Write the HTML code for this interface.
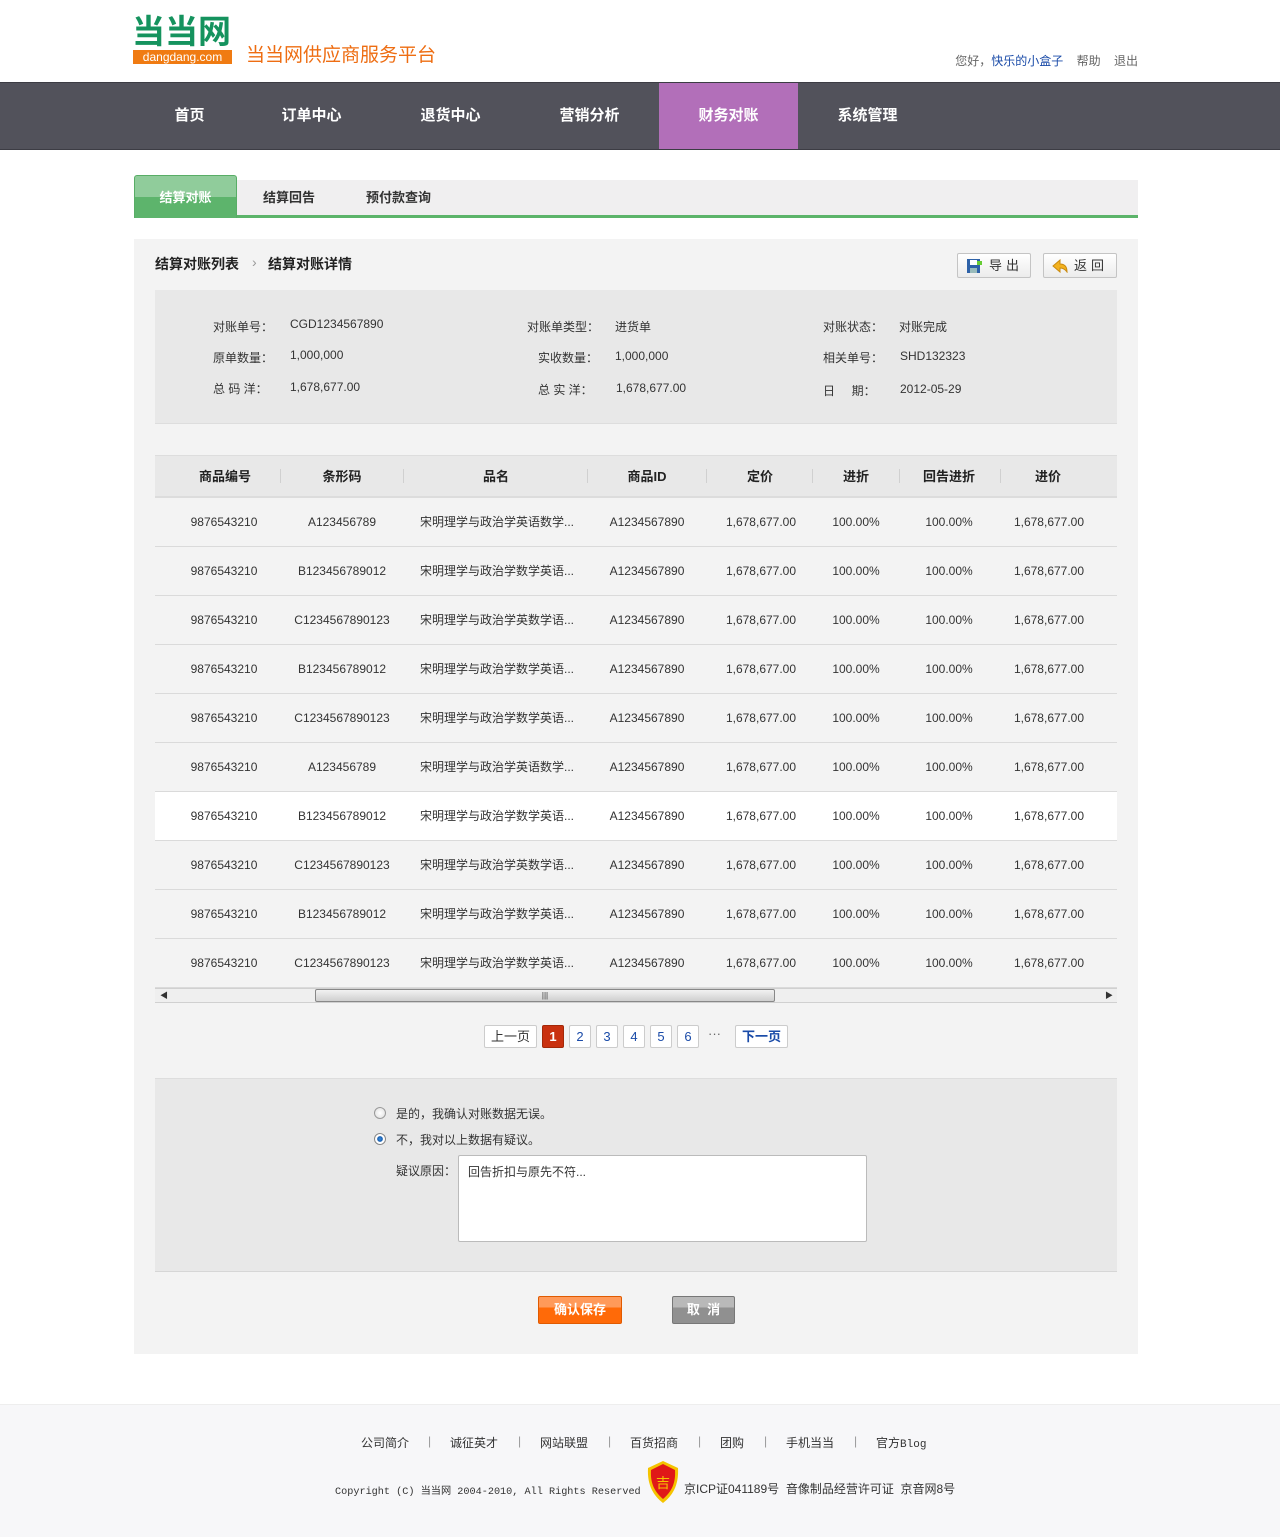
<!DOCTYPE html>
<html><head><meta charset="utf-8">
<style>
*{margin:0;padding:0;box-sizing:border-box}
body{width:1280px;height:1537px;position:relative;background:#fff;font-family:"Liberation Sans","Noto Sans CJK SC",sans-serif;font-size:12px;color:#333;overflow:hidden}
.a{position:absolute;white-space:nowrap}
.nav{position:absolute;left:0;top:82px;width:1280px;height:68px;background:#52525b;border-top:1px solid #3c3c44;border-bottom:1px solid #3c3c44}
.nav span{position:absolute;top:0;height:66px;line-height:66px;color:#fff;font-size:15px;font-weight:bold;text-align:center;width:139px}
.tabs{position:absolute;left:134px;top:180px;width:1004px;height:38px;background:#f0eff0;border-bottom:3px solid #5cb46a}
.tab{position:absolute;top:0;font-size:13px;font-weight:bold;color:#333;line-height:36px}
.panel{position:absolute;left:134px;top:239px;width:1004px;height:1115px;background:#f3f3f3}
.btn{position:absolute;top:253px;height:25px;width:74px;border:1px solid #c4c4c4;border-radius:2px;background:linear-gradient(#fff,#ececec);font-size:13px;line-height:23px;letter-spacing:4px}
.info{position:absolute;left:155px;top:290px;width:962px;height:134px;background:#e8e8e8;border-bottom:1px solid #ddd}
.info .a{font-size:12px;color:#333}
.th{position:absolute;left:155px;top:455px;width:962px;height:43px;background:#e8e8e8;border-top:1px solid #ddd;border-bottom:2px solid #dcdcdc}
.c{position:absolute;text-align:center;width:130px;margin-left:-65px}
.th .c{top:0;line-height:41px;font-weight:bold;font-size:13px;color:#222}
.sep{position:absolute;top:13px;width:1px;height:14px;background:#d0d0d0}
.row{position:absolute;left:155px;width:962px;height:49px;border-bottom:1px solid #dadada}
.row .c{line-height:48px;font-size:12px;color:#333}
.pg{position:absolute;top:1025px;height:23px;border:1px solid #ccc;border-radius:2px;background:#fff;line-height:21px;text-align:center;font-size:13px;color:#1a4ba8}
.fl{position:absolute;top:1434px;font-size:12px;color:#333;white-space:nowrap}
.fs{position:absolute;top:1434px;font-size:12px;color:#999}
</style></head><body>
<div class="a" style="left:132px;top:14px;width:100px;height:36px;color:#15935e;font-size:33px;font-weight:bold;line-height:36px">当当网</div>
<div class="a" style="left:133px;top:50px;width:99px;height:14px;background:#f07b12;color:#fff;font-size:12px;line-height:14px;text-align:center">dangdang.com</div>
<div class="a" style="left:246px;top:44px;color:#ee6d12;font-size:19px;line-height:24px">当当网供应商服务平台</div>
<div class="a" style="right:142px;top:52px;font-size:12px;color:#666">您好，<span style="color:#1a4ba8">快乐的小盒子</span>&nbsp;&nbsp;&nbsp;&nbsp;帮助&nbsp;&nbsp;&nbsp;&nbsp;退出</div>
<div class="nav">
<span style="left:120px">首页</span><span style="left:242px">订单中心</span><span style="left:381px">退货中心</span><span style="left:520px">营销分析</span><span style="left:659px;background:#b26fb9">财务对账</span><span style="left:798px">系统管理</span>
</div>
<div class="tabs">
<div class="tab" style="left:129px;top:0">结算回告</div>
<div class="tab" style="left:232px">预付款查询</div>
</div>
<div class="a" style="left:134px;top:175px;width:103px;height:43px;border:1px solid #58ad66;border-bottom:none;border-radius:3px 3px 0 0;background:linear-gradient(#90cc9b 0,#90cc9b 50%,#5db46c 50%);color:#fff;font-weight:bold;font-size:13px;line-height:44px;text-align:center">结算对账</div>
<div class="panel"></div>
<div class="a" style="left:155px;top:254px;font-size:14px;font-weight:bold;color:#222">结算对账列表</div>
<div class="a" style="left:252px;top:254px;font-size:14px;color:#999">›</div>
<div class="a" style="left:268px;top:254px;font-size:14px;font-weight:bold;color:#222">结算对账详情</div>
<div class="btn" style="left:957px"><svg style="position:absolute;left:9px;top:5px" width="15" height="14"><rect x="0" y="0" width="13" height="14" fill="#2e62a8"/><rect x="3" y="1" width="7" height="5" fill="#fff"/><rect x="3" y="9" width="7" height="5" fill="#9bb"/><path d="M10 2h5v4h-5z" fill="#6c3"/></svg><span style="position:absolute;left:31px">导出</span></div>
<div class="btn" style="left:1043px"><svg style="position:absolute;left:8px;top:5px" width="16" height="14"><path d="M1 7 L8 1 V5 C13 5 15 8 15 13 C13 10 11 9 8 9 V13 Z" fill="#f3b21f" stroke="#c98a10"/></svg><span style="position:absolute;left:30px">返回</span></div>
<div class="info">
<div class="a" style="left:58px;top:28px">对账单号：</div><div class="a" style="left:135px;top:27px">CGD1234567890</div>
<div class="a" style="left:58px;top:59px">原单数量：</div><div class="a" style="left:135px;top:58px">1,000,000</div>
<div class="a" style="left:58px;top:90px">总 码 洋：</div><div class="a" style="left:135px;top:90px">1,678,677.00</div>
<div class="a" style="left:372px;top:28px">对账单类型：</div><div class="a" style="left:460px;top:28px">进货单</div>
<div class="a" style="left:383px;top:59px">实收数量：</div><div class="a" style="left:460px;top:59px">1,000,000</div>
<div class="a" style="left:383px;top:91px">总 实 洋：</div><div class="a" style="left:461px;top:91px">1,678,677.00</div>
<div class="a" style="left:668px;top:28px">对账状态：</div><div class="a" style="left:744px;top:28px">对账完成</div>
<div class="a" style="left:668px;top:59px">相关单号：</div><div class="a" style="left:745px;top:59px">SHD132323</div>
<div class="a" style="left:668px;top:92px">日&nbsp;&nbsp;&nbsp;&nbsp;&nbsp;期：</div><div class="a" style="left:745px;top:92px">2012-05-29</div>
</div>
<div class="th">
<div class="c" style="left:70px">商品编号</div><div class="c" style="left:187px">条形码</div><div class="c" style="left:341px">品名</div><div class="c" style="left:492px">商品ID</div><div class="c" style="left:605px">定价</div><div class="c" style="left:701px">进折</div><div class="c" style="left:794px">回告进折</div><div class="c" style="left:893px">进价</div>
<div class="sep" style="left:125px"></div><div class="sep" style="left:248px"></div><div class="sep" style="left:432px"></div><div class="sep" style="left:551px"></div><div class="sep" style="left:657px"></div><div class="sep" style="left:744px"></div><div class="sep" style="left:845px"></div>
</div>
<div id="rows"></div>
<script>
var codes=["A123456789","B123456789012","C1234567890123","B123456789012","C1234567890123","A123456789","B123456789012","C1234567890123","B123456789012","C1234567890123"];
var names=["宋明理学与政治学英语数学...","宋明理学与政治学数学英语...","宋明理学与政治学英数学语...","宋明理学与政治学数学英语...","宋明理学与政治学数学英语...","宋明理学与政治学英语数学...","宋明理学与政治学数学英语...","宋明理学与政治学英数学语...","宋明理学与政治学数学英语...","宋明理学与政治学数学英语..."];
var h="";
for(var i=0;i<10;i++){
h+='<div class="row" style="top:'+(498+i*49)+'px;'+(i==6?'background:#fff;':'')+'">'+
'<div class="c" style="left:69px">9876543210</div><div class="c" style="left:187px">'+codes[i]+'</div><div class="c" style="left:342px;width:170px;margin-left:-85px">'+names[i]+'</div><div class="c" style="left:492px">A1234567890</div><div class="c" style="left:606px">1,678,677.00</div><div class="c" style="left:701px">100.00%</div><div class="c" style="left:794px">100.00%</div><div class="c" style="left:894px">1,678,677.00</div></div>';
}
document.getElementById("rows").innerHTML=h;
</script>
<div class="a" style="left:155px;top:988px;width:962px;height:15px;background:#efefef;border-top:1px solid #d0d0d0;border-bottom:1px solid #d0d0d0"></div>
<div class="a" style="left:160px;top:990px;font-size:8px;color:#333">◀</div>
<div class="a" style="left:1105px;top:990px;font-size:8px;color:#333">▶</div>
<div class="a" style="left:315px;top:989px;width:460px;height:13px;border:1px solid #888;border-radius:2px;background:linear-gradient(#f2f2f2,#cfcfcf);text-align:center;font-size:8px;line-height:11px;color:#333">|||</div>
<div class="pg" style="left:484px;width:53px;color:#333">上一页</div>
<div class="pg" style="left:542px;width:22px;background:#c9310f;border-color:#a32808;color:#fff;font-weight:bold">1</div>
<div class="pg" style="left:569px;width:22px">2</div>
<div class="pg" style="left:596px;width:22px">3</div>
<div class="pg" style="left:623px;width:22px">4</div>
<div class="pg" style="left:650px;width:22px">5</div>
<div class="pg" style="left:677px;width:22px">6</div>
<div class="a" style="left:708px;top:1026px;color:#666;font-size:13px">···</div>
<div class="pg" style="left:735px;width:53px;font-weight:bold">下一页</div>
<div class="a" style="left:155px;top:1078px;width:962px;height:194px;background:#e8e8e8;border-top:1px solid #ddd;border-bottom:1px solid #d6d6d6"></div>
<div class="a" style="left:374px;top:1107px;width:12px;height:12px;border-radius:50%;border:1px solid #999;background:radial-gradient(#fff,#ddd)"></div>
<div class="a" style="left:396px;top:1105px;font-size:12px">是的，我确认对账数据无误。</div>
<div class="a" style="left:374px;top:1133px;width:12px;height:12px;border-radius:50%;border:1px solid #888;background:radial-gradient(#3a8ee0 0,#1a5fb0 35%,#fff 45%)"></div>
<div class="a" style="left:396px;top:1131px;font-size:12px">不，我对以上数据有疑议。</div>
<div class="a" style="left:396px;top:1162px;font-size:12px">疑议原因：</div>
<div class="a" style="left:458px;top:1155px;width:409px;height:87px;background:#fff;border:1px solid #bbb;border-radius:2px;padding:7px 9px;font-size:12px">回告折扣与原先不符...</div>
<div class="a" style="left:538px;top:1296px;width:84px;height:28px;border:1px solid #e05a00;border-radius:2px;background:linear-gradient(#ff9a5a 0,#ff9a5a 40%,#ff6a08 40%);color:#fff;font-weight:bold;font-size:13px;line-height:26px;text-align:center">确认保存</div>
<div class="a" style="left:672px;top:1296px;width:63px;height:28px;border:1px solid #777;border-radius:2px;background:linear-gradient(#b9b9b9 0,#b9b9b9 40%,#909090 40%);color:#fff;font-weight:bold;font-size:13px;line-height:26px;text-align:center">取&nbsp;&nbsp;消</div>
<div class="a" style="left:0;top:1404px;width:1280px;height:133px;background:#f7f7f9;border-top:1px solid #eee"></div>
<div class="fl" style="left:361px">公司简介</div><div class="fs" style="left:428px">|</div>
<div class="fl" style="left:450px">诚征英才</div><div class="fs" style="left:518px">|</div>
<div class="fl" style="left:540px">网站联盟</div><div class="fs" style="left:608px">|</div>
<div class="fl" style="left:630px">百货招商</div><div class="fs" style="left:698px">|</div>
<div class="fl" style="left:720px">团购</div><div class="fs" style="left:764px">|</div>
<div class="fl" style="left:786px">手机当当</div><div class="fs" style="left:854px">|</div>
<div class="fl" style="left:876px">官方<span style="font-family:'Liberation Mono',monospace;font-size:11px">Blog</span></div>
<div class="a" style="left:335px;top:1482px;font-size:10.2px;font-family:'Liberation Mono','Noto Sans CJK SC',monospace;color:#333">Copyright (C) 当当网 2004-2010, All Rights Reserved</div>
<svg class="a" style="left:646px;top:1460px" width="34" height="44"><path d="M17 1 L32 8 C33 26 26 36 17 43 C8 36 1 26 2 8 Z" fill="#f5c400"/><path d="M17 4 L29 10 C30 25 24 33 17 39 C10 33 4 25 5 10 Z" fill="#e01818"/><text x="17" y="28" text-anchor="middle" font-size="14" fill="#f5c400" font-family="Noto Sans CJK SC">吉</text></svg>
<div class="a" style="left:684px;top:1480px;font-size:12px;color:#333">京ICP证041189号&nbsp;&nbsp;音像制品经营许可证&nbsp;&nbsp;京音网8号</div>
</body></html>
